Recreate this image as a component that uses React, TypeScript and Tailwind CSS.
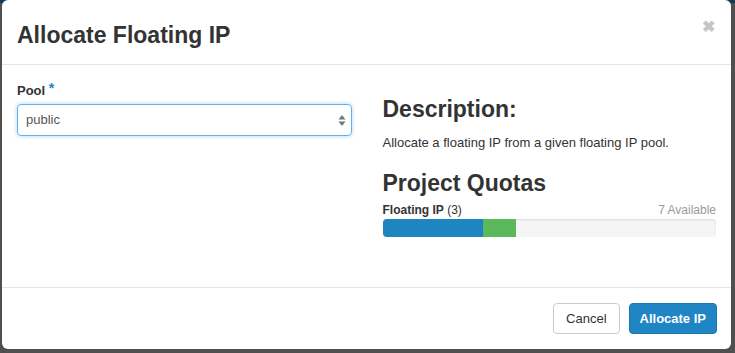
import React from 'react';

const font = { fontFamily: '"Liberation Sans", Arial, sans-serif' };

export default function App() {
  return (
    <div className="w-[735px] h-[353px] bg-[#4f4f4f] flex flex-col overflow-hidden" style={font}>
      <div className="h-[3px] bg-[#0f3b54] shrink-0" />
      <div className="flex pl-[2px] -mt-[3px]">
        <div className="w-[729px] h-[349px] bg-white rounded-[6px] flex flex-col text-[#333]">
          {/* header */}
          <div className="h-[65px] border-b border-[#e5e5e5] flex items-center justify-between pl-[15px] pr-[16px] pt-[6px] shrink-0">
            <h1 className="text-[23px] font-bold leading-none">Allocate Floating IP</h1>
            <span className="text-[#c6c6c6] text-[16px] font-bold leading-none -mt-[16px]">✖</span>
          </div>

          {/* body */}
          <div className="flex-1 grid grid-cols-2 gap-[30px] px-[15px] pt-[16px]">
            <div>
              <label className="block text-[13px] font-bold leading-[20px]">
                Pool <span className="text-[#1f85c5] align-top text-[14px] relative -top-[3px]">*</span>
              </label>
              <div className="mt-[3px] h-[32px] border border-[#66afe9] rounded-[4px] shadow-[0_0_4px_rgba(102,175,233,0.55)] flex items-center justify-between pl-[8px] pr-[5px]">
                <span className="text-[13px] text-[#555]">public</span>
                <svg width="8" height="13" viewBox="0 0 8 13" className="text-[#777]">
                  <path d="M4 1 L7.5 5.5 H0.5 Z" fill="currentColor" />
                  <path d="M4 12 L7.5 7.5 H0.5 Z" fill="currentColor" />
                </svg>
              </div>
            </div>

            <div className="pl-[1px]">
              <h2 className="text-[23px] font-bold leading-[28px] mt-[14px]">Description:</h2>
              <p className="text-[13px] leading-[18px] mt-[11px]">Allocate a floating IP from a given floating IP pool.</p>
              <h2 className="text-[23px] font-bold leading-[28px] mt-[17px]">Project Quotas</h2>
              <div className="flex justify-between text-[12px] leading-[16px] mt-[5px]">
                <span><strong>Floating IP</strong> (3)</span>
                <span className="text-[#999]">7 Available</span>
              </div>
              <div className="mt-[1px] h-[18px] rounded-[4px] bg-[#f5f5f5] shadow-[inset_0_1px_2px_rgba(0,0,0,0.1)] flex overflow-hidden">
                <div className="w-[30%] bg-[#1f85c1]" />
                <div className="w-[10%] bg-[#5cb85c]" />
              </div>
            </div>
          </div>

          {/* footer */}
          <div className="h-[62px] border-t border-[#e5e5e5] flex items-start justify-end gap-[9px] pt-[15px] pr-[14px] shrink-0">
            <button className="h-[31px] px-[12px] rounded-[4px] border border-[#ccc] bg-white text-[13px] text-[#333]">Cancel</button>
            <button className="h-[31px] px-[10px] rounded-[4px] border border-[#1a78b0] bg-[#1f85c5] text-[13px] font-bold text-white">Allocate IP</button>
          </div>
        </div>
      </div>
    </div>
  );
}
